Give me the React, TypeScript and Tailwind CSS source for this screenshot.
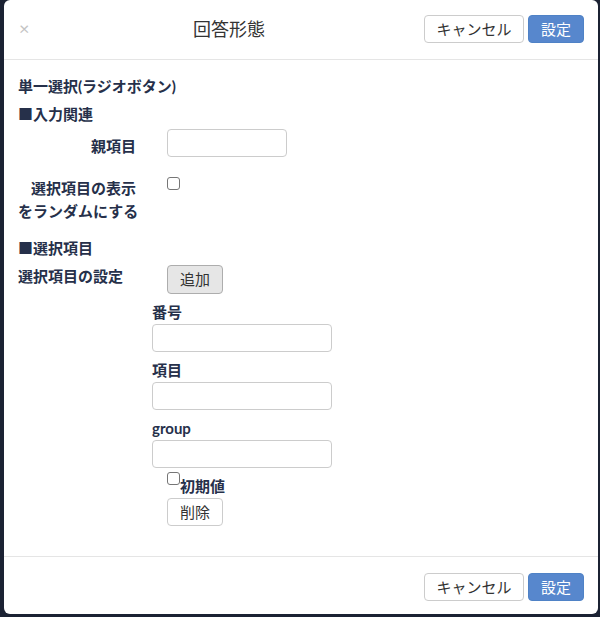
import type { ReactNode } from "react";

// Answer-type settings modal (single choice / radio buttons).

const font = "font-['Lato','Noto_Sans_CJK_JP',sans-serif]";

function Btn({
  primary = false,
  className = "",
  children,
}: {
  primary?: boolean;
  className?: string;
  children: ReactNode;
}) {
  return (
    <button
      className={
        "h-[28px] rounded-[4px] border text-[15px] leading-none " +
        (primary
          ? "border-[#4f82c6] bg-[#5787cd] text-white "
          : "border-[#cccccc] bg-white text-[#333333] ") +
        className
      }
    >
      {children}
    </button>
  );
}

function Field({ label }: { label: string }) {
  return (
    <div>
      <div className="mt-[8px] text-[15px] font-bold leading-[20px] text-[#26304a]">
        {label}
      </div>
      <input className="mt-[2px] block h-[28px] w-[180px] rounded-[4px] border border-[#cccccc] bg-white" />
    </div>
  );
}

function Checkbox({ className = "" }: { className?: string }) {
  return (
    <span
      className={
        "block h-[13px] w-[13px] rounded-[3px] border border-[#767676] bg-white " +
        className
      }
    />
  );
}

export default function App() {
  return (
    <div className={"h-[617px] w-[600px] overflow-hidden bg-[#1b2233] " + font}>
      <div className="ml-[4px] flex h-[614px] w-[594px] flex-col rounded-[6px] bg-white">
        {/* Header */}
        <div className="flex h-[60px] items-start border-b border-[#e5e5e5] px-[14px] pt-[15px]">
          <span className="mt-[2px] w-[16px] pl-[1px] text-[18px] leading-[22px] text-[#c4c4c4]">
            ×
          </span>
          <div className="flex-1 text-center text-[18px] leading-[28px] text-[#333333]">
            回答形態
          </div>
          <Btn className="w-[100px]">キャンセル</Btn>
          <Btn primary className="ml-[4px] w-[56px]">
            設定
          </Btn>
        </div>

        {/* Body */}
        <div className="flex-1 px-[14px] pt-[16px] text-[15px] font-bold text-[#26304a]">
          <div className="leading-[20px]">単一選択(ラジオボタン)</div>
          <div className="mt-[8px] leading-[20px]">■入力関連</div>

          <div className="mt-[5px] flex">
            <div className="w-[118px] pt-[7px] text-right leading-[20px]">親項目</div>
            <input className="ml-[31px] block h-[28px] w-[120px] rounded-[4px] border border-[#cccccc] bg-white" />
          </div>

          <div className="mt-[13px] flex">
            <div className="w-[118px] flex-none whitespace-nowrap pt-[7px] text-right leading-[23px]">
              選択項目の表示
              <br />
              をランダムにする
            </div>
            <Checkbox className="ml-[31px] mt-[7px]" />
          </div>

          <div className="mt-[15px] leading-[20px]">■選択項目</div>

          <div className="mt-[7px] flex">
            <div className="w-[118px] pt-[1px] leading-[20px]">選択項目の設定</div>
            <button className="ml-[31px] h-[29px] w-[56px] rounded-[4px] border border-[#adadad] bg-[#e6e6e6] text-[15px] font-normal leading-none text-[#333333]">
              追加
            </button>
          </div>

          <div className="pl-[134px]">
            <div className="mt-[1px]" />
            <Field label="番号" />
            <Field label="項目" />
            <Field label="group" />
            <div className="mt-[4px] flex items-start pl-[15px]">
              <Checkbox />
              <span className="mt-[4px] leading-[20px]">初期値</span>
            </div>
            <button className="ml-[15px] mt-[2px] h-[28px] w-[56px] rounded-[4px] border border-[#cccccc] bg-white text-[15px] font-normal leading-none text-[#333333]">
              削除
            </button>
          </div>
        </div>

        {/* Footer */}
        <div className="flex justify-end border-t border-[#e5e5e5] px-[14px] pb-[13px] pt-[16px]">
          <Btn className="w-[100px]">キャンセル</Btn>
          <Btn primary className="ml-[4px] w-[56px]">
            設定
          </Btn>
        </div>
      </div>
    </div>
  );
}
